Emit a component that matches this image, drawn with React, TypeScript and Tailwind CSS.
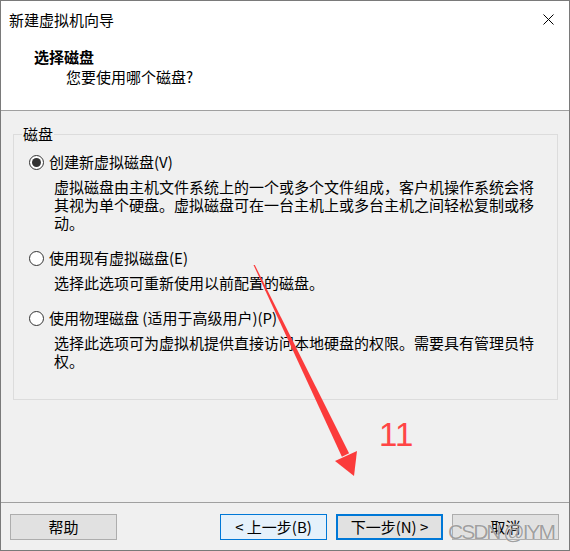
import React from 'react';

function Radio({ checked }: { checked?: boolean }) {
  return (
    <span className="flex h-[15px] w-[15px] shrink-0 items-center justify-center rounded-full border border-[#333333] bg-white">
      {checked && <span className="h-[9px] w-[9px] rounded-full bg-[#333333]" />}
    </span>
  );
}

function Option({
  checked,
  label,
  lines,
  first,
}: {
  checked?: boolean;
  label: string;
  lines: string[];
  first?: boolean;
}) {
  return (
    <div className={first ? 'mt-[8px]' : 'mt-[16px]'}>
      <div className="flex h-[20px] items-center gap-[5px] pl-[15px]">
        <Radio checked={checked} />
        <span className="leading-[20px]">{label}</span>
      </div>
      <div className="mt-[6px] ml-[40px] leading-[18px] [text-spacing-trim:space-all]">
        {lines.map((l) => (
          <div key={l} className="whitespace-nowrap">
            {l}
          </div>
        ))}
      </div>
    </div>
  );
}

function Button({ children, variant }: { children: React.ReactNode; variant?: 'hover' | 'default' }) {
  const look =
    variant === 'hover'
      ? 'border border-[#0078d7] bg-[#e5f1fb]'
      : variant === 'default'
        ? 'border-2 border-[#0078d7] bg-[#e1e1e1]'
        : 'border border-[#adadad] bg-[#e1e1e1]';
  return (
    <button className={`flex h-[26px] w-[107px] items-center justify-center leading-[20px] text-black ${look}`}>
      {children}
    </button>
  );
}

export default function App() {
  return (
    <div className="relative flex h-[551px] w-[570px] flex-col border border-[#7a7a7a] bg-[#f0f0f0] font-['Noto_Sans_CJK_SC','Noto_Sans',sans-serif] text-[15px] text-black">
      {/* Title + header */}
      <div className="h-[110px] border-b border-[#a0a0a0] bg-white">
        <div className="flex h-[37px] items-center justify-between pl-[8px] pr-[15px]">
          <span className="leading-[20px]">新建虚拟机向导</span>
          <svg width="11" height="11" viewBox="0 0 11 11" className="shrink-0">
            <path d="M0.5 0.5 L10.5 10.5 M10.5 0.5 L0.5 10.5" stroke="#000" strokeWidth="1" fill="none" />
          </svg>
        </div>
        <div className="pt-[9px]">
          <div className="pl-[33px] font-bold leading-[20px]">选择磁盘</div>
          <div className="pl-[65px] leading-[20px]">您要使用哪个磁盘?</div>
        </div>
      </div>

      {/* Body */}
      <div className="flex-1">
        <div className="mt-[23px] ml-[12px] mr-[11px] h-[266px] border border-[#dcdcdc]">
          <span className="-mt-[11px] ml-[8px] block w-fit bg-[#f0f0f0] px-[1px] leading-[20px]">磁盘</span>
          <Option
            first
            checked
            label="创建新虚拟磁盘(V)"
            lines={[
              '虚拟磁盘由主机文件系统上的一个或多个文件组成，客户机操作系统会将',
              '其视为单个硬盘。虚拟磁盘可在一台主机上或多台主机之间轻松复制或移',
              '动。',
            ]}
          />
          <Option label="使用现有虚拟磁盘(E)" lines={['选择此选项可重新使用以前配置的磁盘。']} />
          <Option
            label="使用物理磁盘 (适用于高级用户)(P)"
            lines={['选择此选项可为虚拟机提供直接访问本地硬盘的权限。需要具有管理员特', '权。']}
          />
        </div>
      </div>

      {/* Footer */}
      <div className="flex h-[48px] border-t border-[#a0a0a0] pt-[11px] pl-[9px] pr-[10px]">
        <Button>帮助</Button>
        <div className="ml-auto flex gap-[9px]">
          <Button variant="hover">&lt; 上一步(B)</Button>
          <Button variant="default">下一步(N) &gt;</Button>
          <Button>取消</Button>
        </div>
      </div>

      {/* Annotation arrow */}
      <svg className="pointer-events-none absolute left-[-1px] top-[-1px]" width="570" height="551" viewBox="0 0 570 551">
        <polygon points="253.5,265 254.8,265 349.1,453.2 341.9,456.8" fill="#fb3b3b" />
        <polygon points="335,461 357,451 354,476" fill="#fb3b3b" />
      </svg>
      <span className="pointer-events-none absolute left-[378px] top-[417px] font-['Liberation_Sans',sans-serif] text-[33px] leading-none text-[#ff4545]">
        11
      </span>
      <span className="pointer-events-none absolute left-[447px] top-[519px] font-['Liberation_Sans',sans-serif] text-[21px] leading-[24px] tracking-[-2px] text-[rgba(120,120,120,0.7)] [text-shadow:0_0_1px_rgba(255,255,255,0.9)]">
        CSDN @IYM
      </span>
    </div>
  );
}
